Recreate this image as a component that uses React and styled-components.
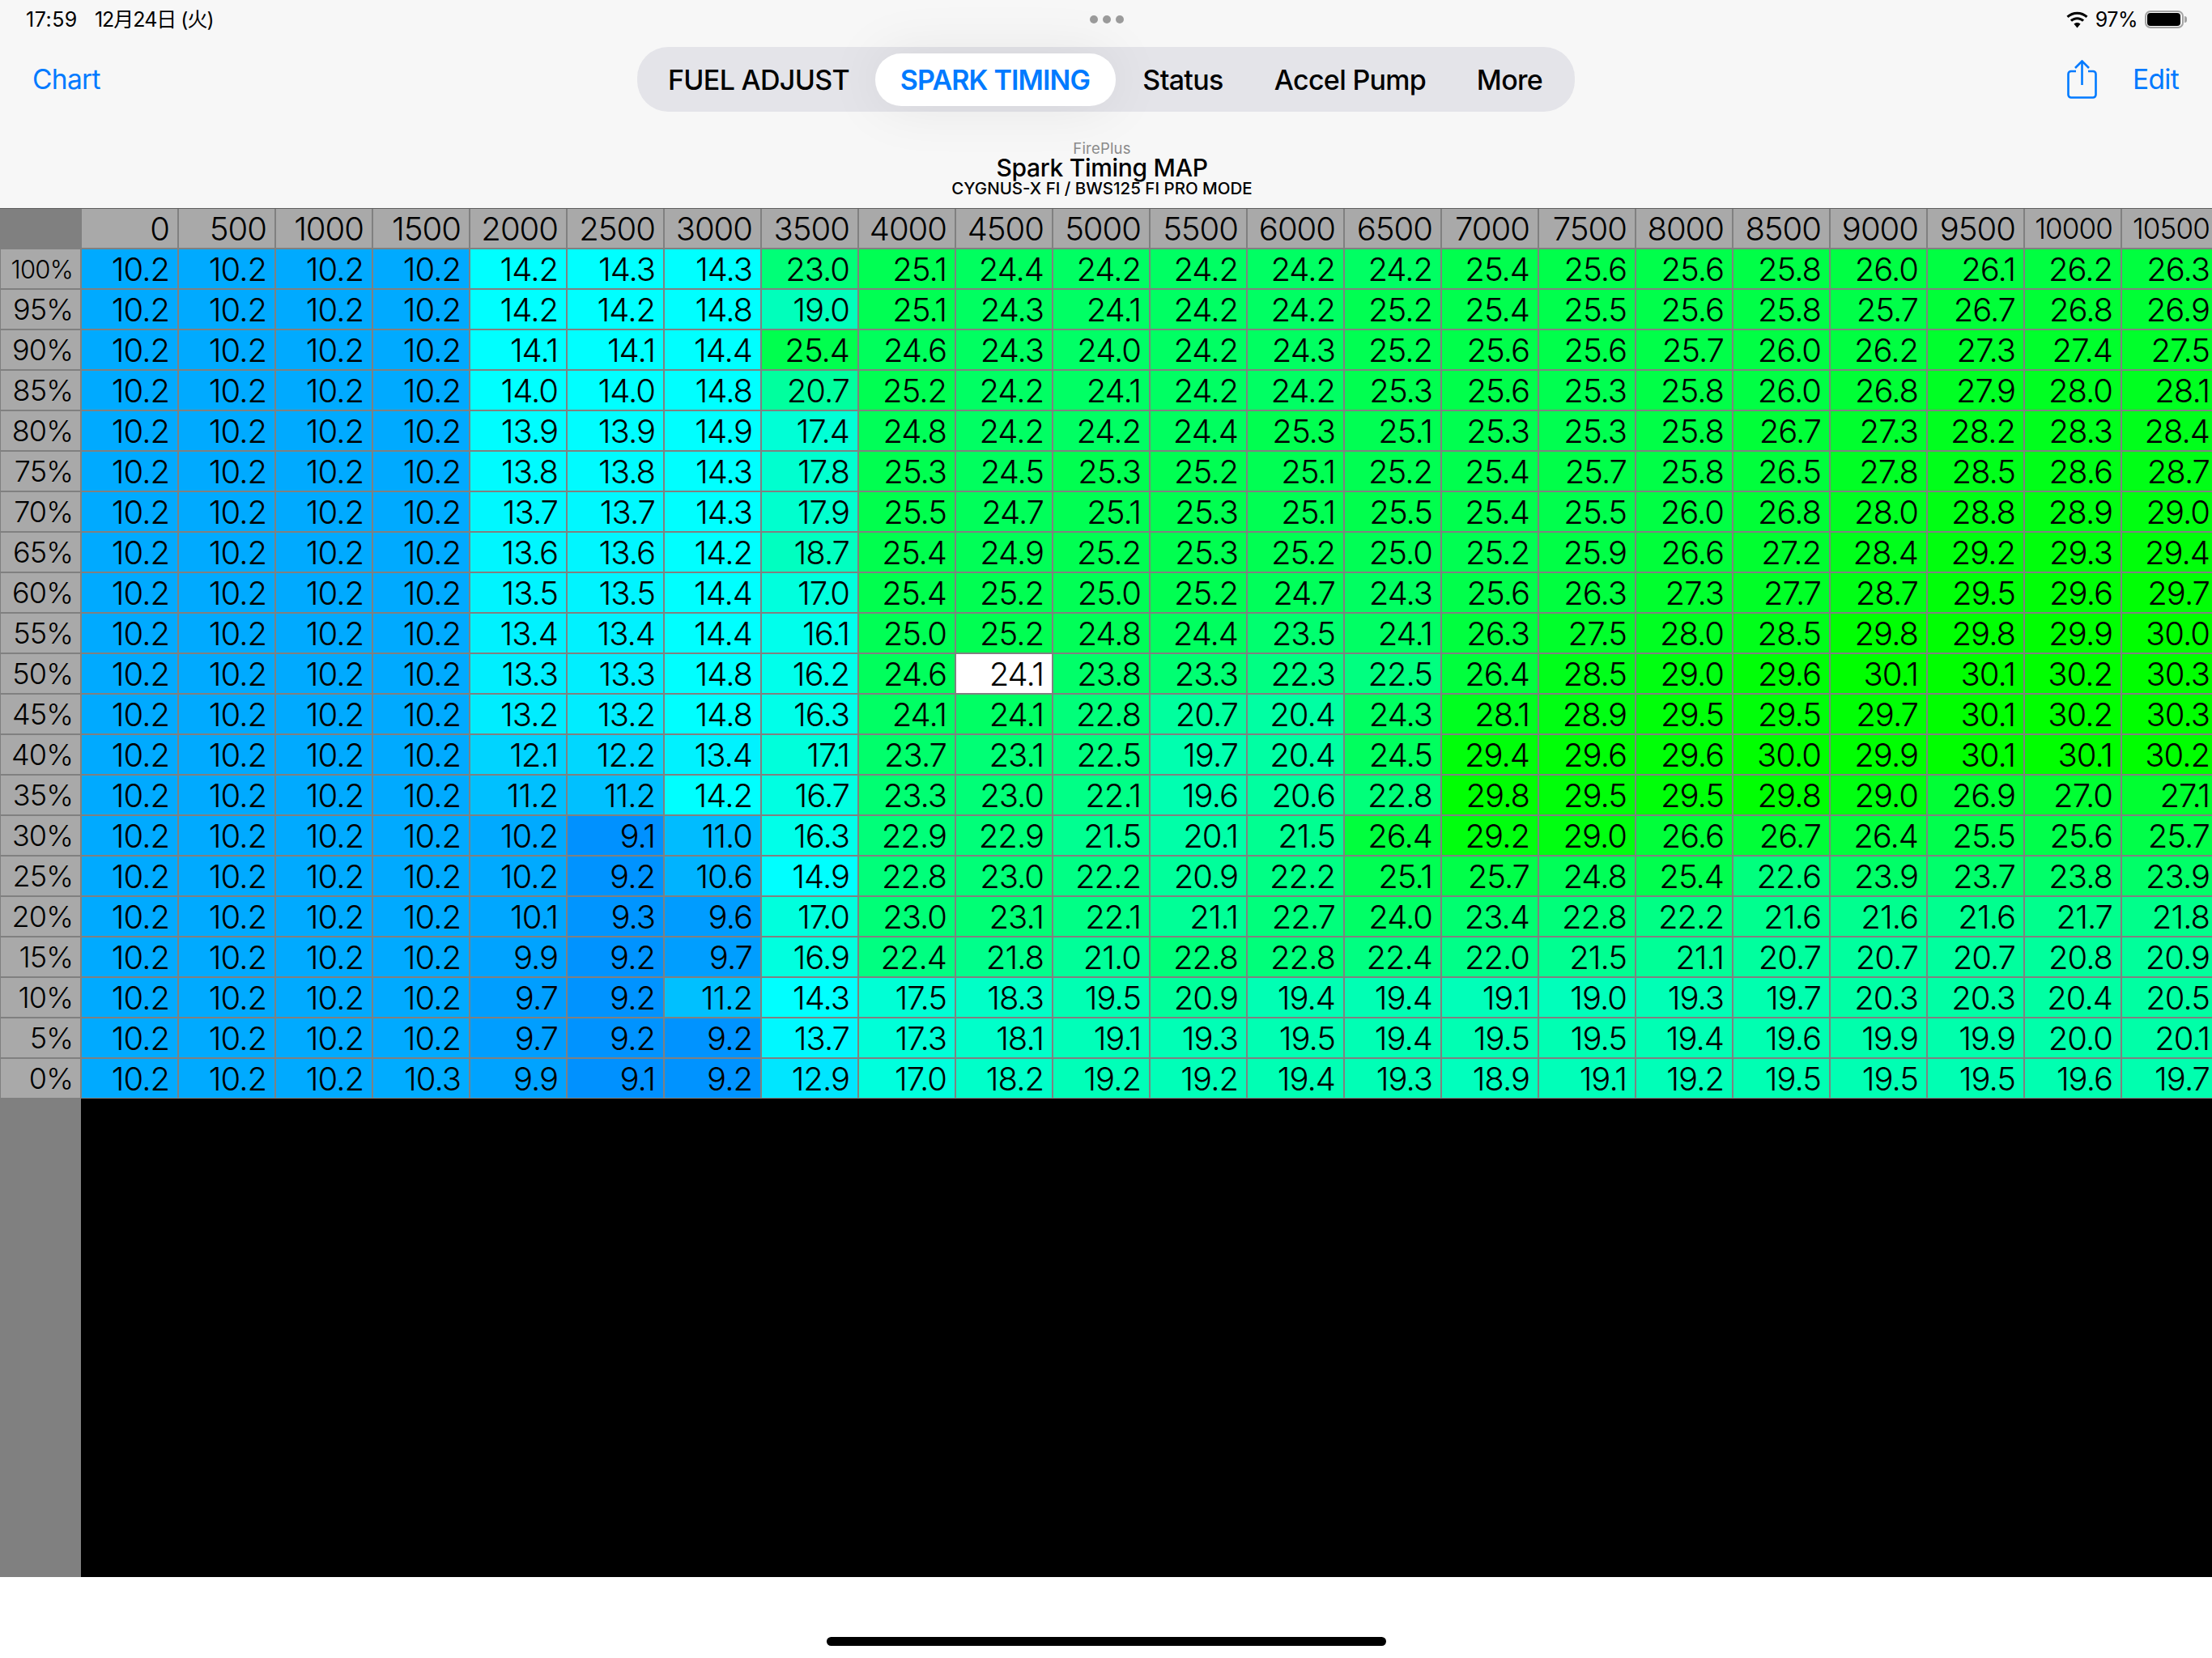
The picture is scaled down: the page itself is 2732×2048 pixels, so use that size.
import React from "react";
import styled, { createGlobalStyle } from "styled-components";

const Global = createGlobalStyle`
  html, body { margin: 0; padding: 0; background: #fff; }
  #root { width: 2732px; height: 2048px; overflow: hidden; }
  * { box-sizing: border-box; }
`;

const FONT = `Inter, "Noto Sans CJK JP", "Liberation Sans", sans-serif`;

const Page = styled.div`
  width: 2732px;
  height: 2048px;
  display: flex;
  flex-direction: column;
  font-family: ${FONT};
  color: #000;
  background: #fff;
  overflow: hidden;
`;
const Top = styled.header`
  height: 257px;
  flex: none;
  background: #f7f7f7;
  display: flex;
  flex-direction: column;
`;
const StatusBar = styled.div`
  height: 48px;
  flex: none;
  display: grid;
  grid-template-columns: 1fr auto 1fr;
  align-items: center;
  padding: 0 30px 0 32px;
  font-size: 25px;
  line-height: 30px;
  letter-spacing: -0.02em;
`;
const StatusLeft = styled.div`
  display: flex;
  align-items: baseline;
  gap: 21px;
`;
const StatusTime = styled.span`
  letter-spacing: 0.02em;
`;
const StatusDate = styled.span`
  letter-spacing: -0.04em;
`;
const StatusRight = styled.div`
  display: flex;
  justify-content: flex-end;
  align-items: center;
  gap: 8px;
`;
const Dots = styled.div`
  display: flex;
  gap: 6px;
`;
const Dot = styled.i`
  width: 10px;
  height: 10px;
  border-radius: 50%;
  background: #9b9b9b;
`;
const Battery = styled.div`
  width: 48px;
  height: 22px;
  margin: 0 5px 0 1px;
  padding: 1px;
  border: 2px solid #a3a3a3;
  border-radius: 7px;
  position: relative;
  &::before {
    content: "";
    display: block;
    height: 100%;
    width: 97%;
    border-radius: 4px;
    background: #000;
  }
  &::after {
    content: "";
    position: absolute;
    right: -6px;
    top: 5px;
    width: 3px;
    height: 8px;
    border-radius: 0 3px 3px 0;
    background: #a3a3a3;
  }
`;
const NavBar = styled.nav`
  margin-top: 10px;
  height: 80px;
  flex: none;
  display: grid;
  grid-template-columns: 1fr auto 1fr;
  align-items: center;
  padding: 0 41px 0 40px;
`;
const NavLink = styled.span`
  color: #007aff;
  font-size: 33.500px;
  letter-spacing: -0.02em;
`;
const NavRight = styled.div`
  display: flex;
  justify-content: flex-end;
  align-items: center;
  gap: 44px;
`;
const Segments = styled.div`
  width: 1158px;
  height: 80px;
  border-radius: 38px;
  background: #e4e4e9;
  padding: 8px 0 7px;
  display: flex;
  align-items: stretch;
`;
const Segment = styled.div`
  width: ${(p) => p.$w}px;
  padding: ${(p) => p.$pad || "0"};
  flex: none;
  display: flex;
  align-items: center;
  justify-content: center;
  font-size: 34px;
  font-weight: ${(p) => (p.$active ? 600 : 450)};
  letter-spacing: ${(p) => (p.$active ? "-0.025em" : "-0.02em")};
  border-radius: 32px;
  color: ${(p) => (p.$active ? "#007aff" : "#000")};
  background: ${(p) => (p.$active ? "#fff" : "transparent")};
  box-shadow: ${(p) => (p.$active ? "0 0 70px rgba(0,0,0,.08)" : "none")};
`;
const TitleBlock = styled.div`
  margin-top: 35px;
  padding-right: 10px;
  display: flex;
  flex-direction: column;
  align-items: center;
`;
const AppName = styled.div`
  font-size: 18.500px;
  line-height: 20px;
  color: #8a8a8a;
  letter-spacing: 0.01em;
`;
const MapTitle = styled.div`
  font-size: 30px;
  line-height: 29px;
  font-weight: 500;
  letter-spacing: -0.01em;
`;
const MapSubtitle = styled.div`
  font-size: 20.500px;
  line-height: 21px;
  font-weight: 500;
`;
const Table = styled.div`
  flex: none;
  width: 2740px;
  display: grid;
  grid-template-columns: 98px repeat(22, 118px);
  grid-auto-rows: 48px;
  gap: 2px;
  padding: 0 0 1px 1px;
  background: #808080;
  border-top: 1px solid #5e5e5e;
`;
const Corner = styled.div``;
const Cell = styled.div`
  display: flex;
  align-items: center;
  justify-content: flex-end;
  padding-right: 10px;
  font-size: 40px;
  font-weight: 350;
  letter-spacing: -0.025em;
  white-space: nowrap;
`;
const HeadCell = styled(Cell)`
  background: #a9a9a9;
  font-size: ${(p) => (p.$small ? 35 : 40)}px;
`;
const RowLabel = styled(Cell)`
  background: #a9a9a9;
  padding-right: 9px;
  font-size: ${(p) => (p.$small ? 31 : 36)}px;
`;
const DataCell = styled(Cell).attrs((p) => ({ style: { background: p.$color } }))``;
const Lower = styled.div`
  flex: none;
  height: 591px;
  display: flex;
`;
const Gutter = styled.div`
  width: 100px;
  background: #808080;
`;
const Black = styled.div`
  flex: 1;
  background: #000;
`;
const Footer = styled.footer`
  flex: 1;
  display: flex;
  justify-content: center;
  padding-top: 74px;
  background: #fff;
`;
const HomeBar = styled.div`
  width: 691px;
  height: 11px;
  border-radius: 6px;
  background: #000;
`;

const Wifi = () => (
  <svg width="29" height="21" viewBox="1.500 0 25 19.500" aria-hidden="true">
    <path d="M14 3.500c3.900 0 7.500 1.500 10.200 4l1.900-2.100C22.900 2.400 18.700.6 14 .6S5.100 2.400 1.900 5.400l1.900 2.100c2.700-2.500 6.300-4 10.200-4z" />
    <path d="M14 9.600c2.300 0 4.400.9 6 2.300l2-2.100c-2.100-1.900-5-3.100-8-3.100s-5.900 1.200-8 3.100l2 2.100c1.600-1.400 3.700-2.300 6-2.300z" />
    <path d="M14 13c-1.500 0-2.800.6-3.800 1.500L14 19l3.800-4.500c-1-.9-2.300-1.500-3.800-1.500z" />
  </svg>
);
const Share = () => (
  <svg width="37" height="48" viewBox="0 0 37 48" fill="none" stroke="#007aff" strokeWidth="2.600" aria-hidden="true">
    <path d="M11 14H5a3.500 3.500 0 0 0-3.500 3.500V43A3.500 3.500 0 0 0 5 46.500h27a3.500 3.500 0 0 0 3.500-3.500V17.500A3.500 3.500 0 0 0 32 14h-6" />
    <path d="M18.500 31V2" />
    <path d="M10 10l8.500-8.500L27 10" />
  </svg>
);

const RPMS = [0,500,1000,1500,2000,2500,3000,3500,4000,4500,5000,5500,6000,6500,7000,7500,8000,8500,9000,9500,10000,10500];
const TABS = [
  ["FUEL ADJUST", 294, false, "0 0 0 7px"],
  ["SPARK TIMING", 297, true],
  ["Status", 167],
  ["Accel Pump", 246],
  ["More", 154, false, "0 6px 0 0"],
];
const L = "10.2 10.2 10.2 10.2 ";
const DATA = [
  [100, L + "14.2 14.3 14.3 23.0 25.1 24.4 24.2 24.2 24.2 24.2 25.4 25.6 25.6 25.8 26.0 26.1 26.2 26.3"],
  [95, L + "14.2 14.2 14.8 19.0 25.1 24.3 24.1 24.2 24.2 25.2 25.4 25.5 25.6 25.8 25.7 26.7 26.8 26.9"],
  [90, L + "14.1 14.1 14.4 25.4 24.6 24.3 24.0 24.2 24.3 25.2 25.6 25.6 25.7 26.0 26.2 27.3 27.4 27.5"],
  [85, L + "14.0 14.0 14.8 20.7 25.2 24.2 24.1 24.2 24.2 25.3 25.6 25.3 25.8 26.0 26.8 27.9 28.0 28.1"],
  [80, L + "13.9 13.9 14.9 17.4 24.8 24.2 24.2 24.4 25.3 25.1 25.3 25.3 25.8 26.7 27.3 28.2 28.3 28.4"],
  [75, L + "13.8 13.8 14.3 17.8 25.3 24.5 25.3 25.2 25.1 25.2 25.4 25.7 25.8 26.5 27.8 28.5 28.6 28.7"],
  [70, L + "13.7 13.7 14.3 17.9 25.5 24.7 25.1 25.3 25.1 25.5 25.4 25.5 26.0 26.8 28.0 28.8 28.9 29.0"],
  [65, L + "13.6 13.6 14.2 18.7 25.4 24.9 25.2 25.3 25.2 25.0 25.2 25.9 26.6 27.2 28.4 29.2 29.3 29.4"],
  [60, L + "13.5 13.5 14.4 17.0 25.4 25.2 25.0 25.2 24.7 24.3 25.6 26.3 27.3 27.7 28.7 29.5 29.6 29.7"],
  [55, L + "13.4 13.4 14.4 16.1 25.0 25.2 24.8 24.4 23.5 24.1 26.3 27.5 28.0 28.5 29.8 29.8 29.9 30.0"],
  [50, L + "13.3 13.3 14.8 16.2 24.6 24.1 23.8 23.3 22.3 22.5 26.4 28.5 29.0 29.6 30.1 30.1 30.2 30.3"],
  [45, L + "13.2 13.2 14.8 16.3 24.1 24.1 22.8 20.7 20.4 24.3 28.1 28.9 29.5 29.5 29.7 30.1 30.2 30.3"],
  [40, L + "12.1 12.2 13.4 17.1 23.7 23.1 22.5 19.7 20.4 24.5 29.4 29.6 29.6 30.0 29.9 30.1 30.1 30.2"],
  [35, L + "11.2 11.2 14.2 16.7 23.3 23.0 22.1 19.6 20.6 22.8 29.8 29.5 29.5 29.8 29.0 26.9 27.0 27.1"],
  [30, L + "10.2 9.1 11.0 16.3 22.9 22.9 21.5 20.1 21.5 26.4 29.2 29.0 26.6 26.7 26.4 25.5 25.6 25.7"],
  [25, L + "10.2 9.2 10.6 14.9 22.8 23.0 22.2 20.9 22.2 25.1 25.7 24.8 25.4 22.6 23.9 23.7 23.8 23.9"],
  [20, L + "10.1 9.3 9.6 17.0 23.0 23.1 22.1 21.1 22.7 24.0 23.4 22.8 22.2 21.6 21.6 21.6 21.7 21.8"],
  [15, L + "9.9 9.2 9.7 16.9 22.4 21.8 21.0 22.8 22.8 22.4 22.0 21.5 21.1 20.7 20.7 20.7 20.8 20.9"],
  [10, L + "9.7 9.2 11.2 14.3 17.5 18.3 19.5 20.9 19.4 19.4 19.1 19.0 19.3 19.7 20.3 20.3 20.4 20.5"],
  [5, L + "9.7 9.2 9.2 13.7 17.3 18.1 19.1 19.3 19.5 19.4 19.5 19.5 19.4 19.6 19.9 19.9 20.0 20.1"],
  [0, "10.2 10.2 10.2 10.3 9.9 9.1 9.2 12.9 17.0 18.2 19.2 19.2 19.4 19.3 18.9 19.1 19.2 19.5 19.5 19.5 19.6 19.7"],
];

function colorFor(v) {
  if (v <= 14) return `rgb(0,${Math.round(255 - (14 - v) * 22.5)},255)`;
  if (v <= 15) return "rgb(0,255,255)";
  return `rgb(0,255,${Math.max(0, Math.round((255 * (30 - v)) / 15))})`;
}

export default function App() {
  return (
    <Page>
      <Global />
      <Top>
        <StatusBar>
          <StatusLeft>
            <StatusTime>17:59</StatusTime>
            <StatusDate>12月24日 (火)</StatusDate>
          </StatusLeft>
          <Dots><Dot /><Dot /><Dot /></Dots>
          <StatusRight>
            <Wifi />
            <span>97%</span>
            <Battery />
          </StatusRight>
        </StatusBar>
        <NavBar>
          <NavLink>Chart</NavLink>
          <Segments>
            {TABS.map(([t, w, a, pad]) => (
              <Segment key={t} $w={w} $active={a} $pad={pad}>{t}</Segment>
            ))}
          </Segments>
          <NavRight>
            <Share />
            <NavLink>Edit</NavLink>
          </NavRight>
        </NavBar>
        <TitleBlock>
          <AppName>FirePlus</AppName>
          <MapTitle>Spark Timing MAP</MapTitle>
          <MapSubtitle>CYGNUS-X FI / BWS125 FI PRO MODE</MapSubtitle>
        </TitleBlock>
      </Top>
      <Table>
        <Corner />
        {RPMS.map((r) => (
          <HeadCell key={r} $small={r >= 10000}>{r}</HeadCell>
        ))}
        {DATA.map(([pct, vals]) => (
          <React.Fragment key={pct}>
            <RowLabel $small={pct === 100}>{pct}%</RowLabel>
            {vals.split(" ").map((v, i) => (
              <DataCell key={i} $color={pct === 50 && i === 9 ? "#fff" : colorFor(parseFloat(v))}>{v}</DataCell>
            ))}
          </React.Fragment>
        ))}
      </Table>
      <Lower>
        <Gutter />
        <Black />
      </Lower>
      <Footer>
        <HomeBar />
      </Footer>
    </Page>
  );
}
